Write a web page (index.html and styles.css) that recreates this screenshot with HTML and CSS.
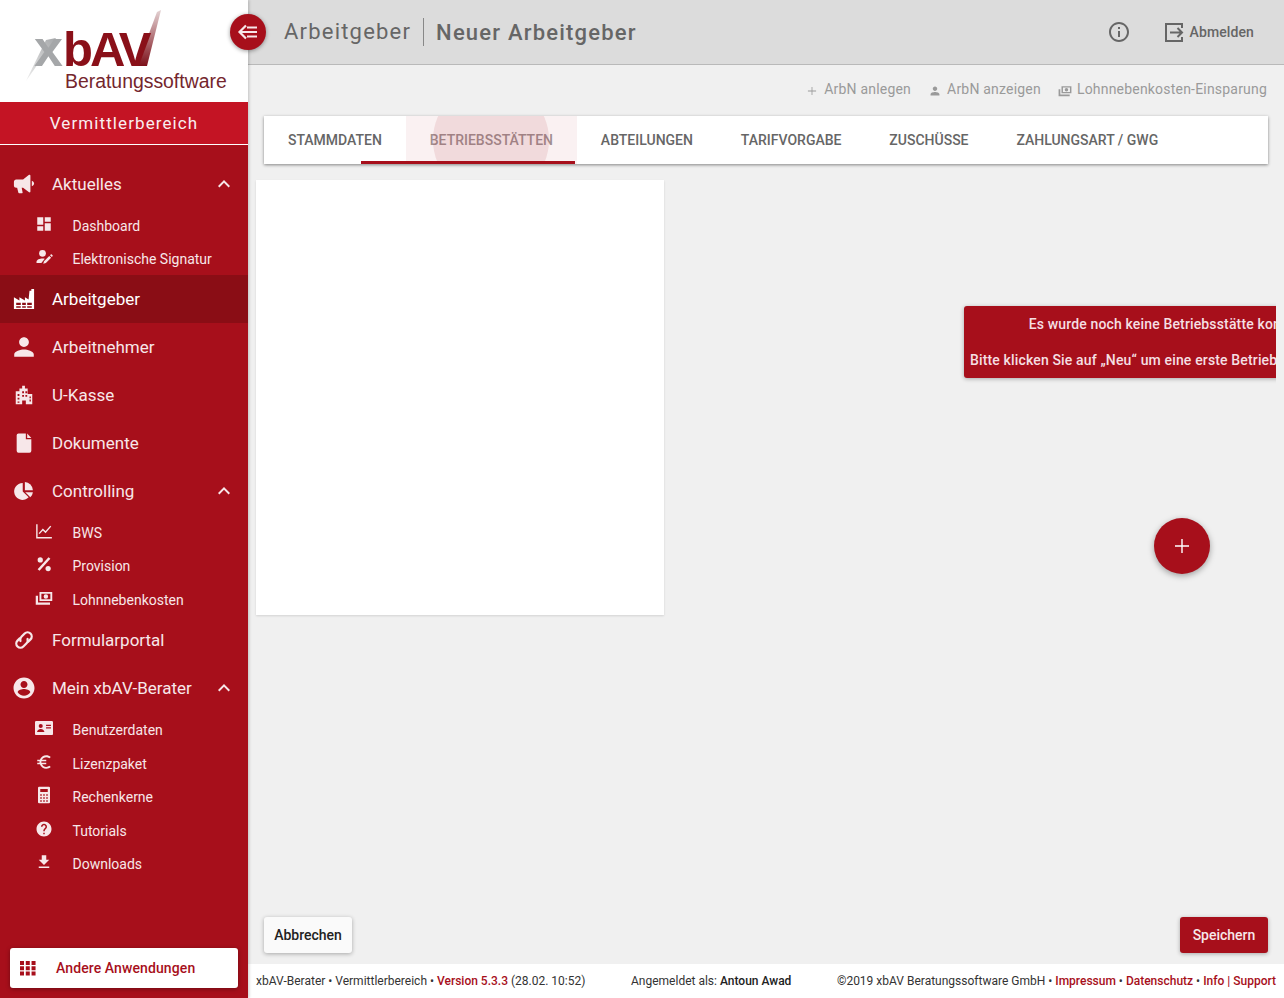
FILE: index.html
```html
<!DOCTYPE html>
<html lang="de">
<head>
    <meta charset="UTF-8">
    <meta name="viewport" content="width=device-width, initial-scale=1.0">
    <title>xbAV Beratungssoftware</title>
    <link rel="stylesheet" href="styles.css">
</head>
<body>
<svg class="sprite" aria-hidden="true">
    <symbol id="i-horn" viewBox="0 0 24 24"><path d="M1 9.500C1 8.100 2.100 7 3.500 7H11l6.500-5c.6-.4 1.500 0 1.500.8v17.400c0 .8-.9 1.200-1.500.8L11 16H9.500l1 5.200c.1.400-.2.800-.6.800H6.600c-.3 0-.6-.2-.7-.5L4.500 16h-1C2.100 16 1 14.900 1 13.500z"/><path d="M20.500 8.500c1.600.6 2.500 1.700 2.500 3s-.9 2.400-2.500 3z"/></symbol>
    <symbol id="i-dash" viewBox="0 0 24 24"><path d="M3 13h8V3H3v10zm0 8h8v-6H3v6zm10 0h8V11h-8v10zm0-18v6h8V3h-8z"/></symbol>
    <symbol id="i-sign" viewBox="0 0 24 24"><circle cx="10" cy="7" r="4.500"/><path d="M2 20v-1.500C2 15.500 6.500 14 10 14c1 0 2 .1 3 .4L8.500 20z"/><path d="M11 21l1-3.500 7-7 2.500 2.500-7 7zM20 9.500l1-1c.4-.4 1-.4 1.400 0l1 1c.4.400.4 1 0 1.400l-1 1z"/></symbol>
    <symbol id="i-factory" viewBox="0 0 24 24"><path fill-rule="evenodd" d="M1 23V10l6 3.500V10l6 3.500V10l4 2.500L18 3h2V1h3v22zM3.500 16v2.500h5V16zm6.500 0v2.500h4V16zm5.500 0v2.500h5V16zM3.500 20v1.500h5V20zm6.500 0v1.500h4V20zm5.500 0v1.500h5V20z"/></symbol>
    <symbol id="i-person" viewBox="3 3 18 18"><path d="M12 12c2.210 0 4-1.790 4-4s-1.790-4-4-4-4 1.790-4 4 1.790 4 4 4zm0 2c-2.670 0-8 1.340-8 4v2h16v-2c0-2.660-5.330-4-8-4z"/></symbol>
    <symbol id="i-city" viewBox="0 0 24 24"><path fill-rule="evenodd" d="M3 22V8h4V5h3V2h3v3h3v6h5v11h-7v-4h-4v4zM5 11v2h2v-2zm0 4v2h2v-2zm0 4v1.500h2V19zm5-11v2h2V8zm3.500 0v2h2V8zM10 12v2h2v-2zm3.500 0v2h2v-2zM18 13.500v2h1.500v-2zm0 3.500v2h1.500v-2z"/></symbol>
    <symbol id="i-file" viewBox="0 0 24 24"><path d="M14 1.500H6a2 2 0 0 0-2 2v17a2 2 0 0 0 2 2h12a2 2 0 0 0 2-2V8h-6z"/><path d="M15.500 1.500V6.500H20z"/></symbol>
    <symbol id="i-pie" viewBox="-1 -1 26 26"><path d="M10.500 2.500v10l7 7a10 10 0 1 1-7-17z"/><path d="M13 1.500a10 10 0 0 1 9.500 9.500H13z"/><path d="M13.500 13.500h9a10 10 0 0 1-3 6z"/></symbol>
    <symbol id="i-chart" viewBox="0 0 24 24"><path fill="none" stroke="currentColor" stroke-width="1.900" d="M2.500 3v18h20M5.500 15.500l5-5.500 3.500 3.500 7-8"/></symbol>
    <symbol id="i-percent" viewBox="0 0 24 24"><circle cx="7" cy="6.500" r="3.500"/><circle cx="17.500" cy="18" r="3.500"/><path d="M18 3l2.500 2L6 21l-2.500-2z"/></symbol>
    <symbol id="i-money" viewBox="0 0 24 24"><path fill-rule="evenodd" d="M6 4h17v12H6zm2.500 2.200v7.600h12V6.200zM14.500 7a3 3 0 1 1 0 6 3 3 0 0 1 0-6z"/><path d="M1 9h3v9h16v3H1z"/></symbol>
    <symbol id="i-link" viewBox="0 0 24 24"><g transform="rotate(-45 12 12)" fill="none" stroke="currentColor" stroke-width="2.500" stroke-linecap="round"><path d="M10 7.500H6.500a4.500 4.500 0 0 0 0 9h5a4.500 4.500 0 0 0 4-2.500"/><path d="M14 16.500h3.500a4.500 4.500 0 0 0 0-9h-5a4.500 4.500 0 0 0-4 2.500"/></g></symbol>
    <symbol id="i-account" viewBox="1 1 22 22"><path d="M12 1.500C6.200 1.500 1.500 6.200 1.500 12S6.200 22.500 12 22.500 22.500 17.800 22.500 12 17.800 1.500 12 1.500zm0 3.500c1.900 0 3.500 1.600 3.500 3.500S13.900 12 12 12s-3.500-1.600-3.500-3.500S10.100 5 12 5zm0 14.700c-2.600 0-4.900-1.300-6.300-3.400.03-2.100 4.200-3.200 6.300-3.200s6.270 1.100 6.300 3.200c-1.400 2.100-3.700 3.400-6.300 3.400z"/></symbol>
    <symbol id="i-card" viewBox="1 1 22 22"><path fill-rule="evenodd" d="M2 3.500h20a1.500 1.500 0 0 1 1 1.500v14a1.500 1.500 0 0 1-1 1.500H2a1.500 1.500 0 0 1-1-1.500V5a1.500 1.500 0 0 1 1-1.500zM8 7a2.500 2.500 0 1 0 0 5 2.500 2.500 0 0 0 0-5zm-4.500 10h9c0-2-2-3.800-4.500-3.800S3.500 15 3.500 17zM14.500 8v1.500h6V8zm0 3.200v1.500h6v-1.500z"/></symbol>
    <symbol id="i-euro" viewBox="0 0 24 24"><path d="M15 18.500c-2.510 0-4.680-1.420-5.760-3.500H15v-2H8.580c-.05-.33-.08-.66-.08-1s.03-.67.08-1H15V9H9.240C10.320 6.920 12.500 5.500 15 5.500c1.610 0 3.090.59 4.230 1.570L21 5.300C19.410 3.870 17.300 3 15 3c-3.920 0-7.240 2.510-8.480 6H3v2h3.060c-.04.33-.06.66-.06 1s.02.67.06 1H3v2h3.520c1.240 3.490 4.560 6 8.480 6 2.310 0 4.410-.87 6-2.300l-1.780-1.770c-1.130.98-2.600 1.570-4.220 1.570z"/></symbol>
    <symbol id="i-calc" viewBox="0 0 24 24"><path fill-rule="evenodd" d="M5.500 1h13A1.500 1.500 0 0 1 20 2.500v19a1.500 1.500 0 0 1-1.500 1.500h-13A1.500 1.500 0 0 1 4 21.500v-19A1.500 1.500 0 0 1 5.500 1zM7 4v4h10V4zm0 7v2h2v-2zm4 0v2h2v-2zm4 0v2h2v-2zM7 15v2h2v-2zm4 0v2h2v-2zm4 0v2h2v-2zM7 19v2h2v-2zm4 0v2h2v-2zm4 0v2h2v-2z"/></symbol>
    <symbol id="i-help" viewBox="0 0 24 24"><path d="M12 2C6.480 2 2 6.480 2 12s4.480 10 10 10 10-4.480 10-10S17.520 2 12 2zm1 17h-2v-2h2v2zm2.070-7.750l-.9.920C13.450 12.900 13 13.500 13 15h-2v-.5c0-1.100.45-2.100 1.170-2.830l1.240-1.260c.37-.36.59-.86.59-1.410 0-1.100-.9-2-2-2s-2 .9-2 2H8c0-2.210 1.790-4 4-4s4 1.790 4 4c0 .88-.36 1.680-.93 2.250z"/></symbol>
    <symbol id="i-download" viewBox="0 0 24 24"><path d="M19 9h-4V3H9v6H5l7 7 7-7zM5 18v2h14v-2H5z"/></symbol>
    <symbol id="i-less" viewBox="0 0 24 24"><path d="M12 8l-6 6 1.410 1.410L12 10.830l4.590 4.580L18 14z"/></symbol>
    <symbol id="i-apps" viewBox="0 0 18 18"><path d="M0 1h4.500v4.500H0zm6.500 0H11v4.500H6.500zM13 1h4.500v4.500H13zM0 7h4.500v4.500H0zm6.500 0H11v4.500H6.500zM13 7h4.500v4.500H13zM0 13h4.500v4.500H0zm6.500 0H11v4.500H6.500zM13 13h4.500v4.500H13z"/></symbol>
    <symbol id="i-info" viewBox="0 0 24 24"><path d="M11 7h2v2h-2zm0 4h2v6h-2zm1-9C6.480 2 2 6.480 2 12s4.480 10 10 10 10-4.480 10-10S17.520 2 12 2zm0 18c-4.410 0-8-3.590-8-8s3.590-8 8-8 8 3.590 8 8-3.590 8-8 8z"/></symbol>
    <symbol id="i-logout" viewBox="0 0 20 20"><path fill="none" stroke="currentColor" stroke-width="2" d="M18 6V2H2v17h16v-4M6 10.500h12M13.500 6l4.500 4.500-4.500 4.500"/></symbol>
    <symbol id="i-add" viewBox="0 0 24 24"><path d="M19 12.700h-6.300V19h-1.400v-6.300H5v-1.400h6.300V5h1.400v6.300H19z"/></symbol>
</svg>

<div class="app">
    <aside class="sidebar">
        <div class="logo">
            <svg class="logo-img" width="248" height="102" viewBox="0 0 248 102">
                <defs>
                    <linearGradient id="tail-v" x1="0" y1="1" x2="0" y2="0">
                        <stop offset="0" stop-color="#7d1019"/>
                        <stop offset="1" stop-color="#e4d3d4"/>
                    </linearGradient>
                    <linearGradient id="tail-x" x1="1" y1="0" x2="0" y2="1">
                        <stop offset="0" stop-color="#a5a7a9"/>
                        <stop offset="1" stop-color="#eeeeee"/>
                    </linearGradient>
                </defs>
                <polygon points="56,38 46,40 26,81" fill="url(#tail-x)"/>
                <polygon points="137,66 147,66 161,10 157,12" fill="url(#tail-v)"/>
                <text class="logo-x" x="34" y="66">x</text>
                <text class="logo-av" x="63" y="66">bAV</text>
                <text class="logo-sub" x="65" y="88">Beratungssoftware</text>
            </svg>
        </div>
        <div class="area">Vermittlerbereich</div>

        <nav class="menu">
            <a class="item"><svg class="ico"><use href="#i-horn"/></svg><span>Aktuelles</span><svg class="chev"><use href="#i-less"/></svg></a>
            <div class="subs">
                <a class="sub"><svg class="ico-s"><use href="#i-dash"/></svg><span>Dashboard</span></a>
                <a class="sub"><svg class="ico-s"><use href="#i-sign"/></svg><span>Elektronische Signatur</span></a>
            </div>
            <a class="item active"><svg class="ico"><use href="#i-factory"/></svg><span>Arbeitgeber</span></a>
            <a class="item"><svg class="ico"><use href="#i-person"/></svg><span>Arbeitnehmer</span></a>
            <a class="item"><svg class="ico"><use href="#i-city"/></svg><span>U-Kasse</span></a>
            <a class="item"><svg class="ico"><use href="#i-file"/></svg><span>Dokumente</span></a>
            <a class="item"><svg class="ico"><use href="#i-pie"/></svg><span>Controlling</span><svg class="chev"><use href="#i-less"/></svg></a>
            <div class="subs">
                <a class="sub"><svg class="ico-s"><use href="#i-chart"/></svg><span>BWS</span></a>
                <a class="sub"><svg class="ico-s"><use href="#i-percent"/></svg><span>Provision</span></a>
                <a class="sub"><svg class="ico-s"><use href="#i-money"/></svg><span>Lohnnebenkosten</span></a>
            </div>
            <a class="item"><svg class="ico"><use href="#i-link"/></svg><span>Formularportal</span></a>
            <a class="item"><svg class="ico"><use href="#i-account"/></svg><span>Mein xbAV-Berater</span><svg class="chev"><use href="#i-less"/></svg></a>
            <div class="subs subs-last">
                <a class="sub"><svg class="ico-s"><use href="#i-card"/></svg><span>Benutzerdaten</span></a>
                <a class="sub"><svg class="ico-s"><use href="#i-euro"/></svg><span>Lizenzpaket</span></a>
                <a class="sub"><svg class="ico-s"><use href="#i-calc"/></svg><span>Rechenkerne</span></a>
                <a class="sub"><svg class="ico-s"><use href="#i-help"/></svg><span>Tutorials</span></a>
                <a class="sub"><svg class="ico-s"><use href="#i-download"/></svg><span>Downloads</span></a>
            </div>
        </nav>

        <a class="other-apps"><svg class="apps"><use href="#i-apps"/></svg><span>Andere Anwendungen</span></a>
        <button class="toggle" type="button">
            <svg width="22" height="18" viewBox="0 0 22 18"><path d="M9 2.500L2.500 9 9 15.500M2.500 9H20M10 4.500h10M10 13.500h10" fill="none" stroke="currentColor" stroke-width="2.200"/></svg>
        </button>
    </aside>

    <main class="main">
        <header class="topbar">
            <span class="crumb">Arbeitgeber</span>
            <span class="crumb-current">Neuer Arbeitgeber</span>
            <a class="info"><svg><use href="#i-info"/></svg></a>
            <a class="logout"><svg><use href="#i-logout"/></svg><span>Abmelden</span></a>
        </header>

        <div class="quick">
            <a><svg><use href="#i-add"/></svg>ArbN anlegen</a>
            <a><svg class="small"><use href="#i-person"/></svg>ArbN anzeigen</a>
            <a><svg><use href="#i-money"/></svg>Lohnnebenkosten-Einsparung</a>
        </div>

        <div class="tabs">
            <a class="tab">STAMMDATEN</a>
            <a class="tab pressed">BETRIEBSSTÄTTEN</a>
            <a class="tab">ABTEILUNGEN</a>
            <a class="tab">TARIFVORGABE</a>
            <a class="tab">ZUSCHÜSSE</a>
            <a class="tab">ZAHLUNGSART / GWG</a>
            <div class="ink"></div>
        </div>

        <div class="content">
            <div class="list-panel"></div>
            <div class="detail">
                <div class="notice">Es wurde noch keine Betriebsstätte konfiguriert.<br><br>Bitte klicken Sie auf „Neu“ um eine erste Betriebsstätte anzulegen.</div>
                <button class="fab" type="button"><svg><use href="#i-add"/></svg></button>
            </div>
        </div>

        <div class="actions">
            <button class="btn" type="button">Abbrechen</button>
            <button class="btn primary" type="button">Speichern</button>
        </div>

        <footer class="footer">
            <span>xbAV-Berater • Vermittlerbereich • <a>Version 5.3.3</a> (28.02. 10:52)</span>
            <span>Angemeldet als: <b>Antoun Awad</b></span>
            <span>©2019 xbAV Beratungssoftware GmbH • <a>Impressum</a> • <a>Datenschutz</a> • <a>Info</a> <a>|</a> <a>Support</a></span>
        </footer>
    </main>
</div>
</body>
</html>
```

FILE: styles.css
```css
html, body {
    margin: 0;
    height: 100%;
}

body {
    font-family: Roboto, "Liberation Sans", sans-serif;
    background: #f0f0f0;
    overflow: hidden;
}

a {
    color: inherit;
    text-decoration: none;
}

button {
    font-family: inherit;
    border: 0;
    cursor: pointer;
}

.sprite {
    display: none;
}

.app {
    display: flex;
    height: 998px;
}

/* Seitenleiste */
.sidebar {
    position: relative;
    z-index: 2;
    flex: none;
    display: flex;
    flex-direction: column;
    width: 248px;
    background: #a70f1b;
    color: #f7e7e9;
    box-shadow: 1px 0 3px rgba(0, 0, 0, .2);
}

.logo {
    height: 102px;
    background: #fff;
}

.logo-img {
    display: block;
}

.logo-x {
    font: bold 52px "Liberation Sans", sans-serif;
    fill: #a5a7a9;
}

.logo-av {
    font: bold 49px "Liberation Sans", sans-serif;
    letter-spacing: -3px;
    fill: #8a1019;
}

.logo-sub {
    font: 19.400px "Liberation Sans", sans-serif;
    fill: #74262d;
}

.area {
    height: 42px;
    background: #c41424;
    border-bottom: 1px solid #fff;
    color: #f9eef0;
    font-size: 17px;
    line-height: 42px;
    letter-spacing: 1.100px;
    text-align: center;
}

.menu {
    padding-top: 15px;
}

.item {
    display: flex;
    align-items: center;
    gap: 17px;
    height: 48px;
    padding: 0 12px 0 13px;
    font-size: 17px;
}

.item.active {
    background: #8a0d15;
    color: #fff;
}

.ico {
    flex: none;
    width: 22px;
    height: 22px;
    fill: currentColor;
}

.chev {
    flex: none;
    width: 24px;
    height: 24px;
    margin-left: auto;
    fill: currentColor;
}

.subs-last {
    padding-top: 1px;
}

.sub {
    display: flex;
    align-items: center;
    gap: 19.500px;
    height: 33.500px;
    padding-left: 35px;
    font-size: 14px;
}

.sub span {
    position: relative;
    top: 1px;
}

.ico-s {
    flex: none;
    width: 18px;
    height: 18px;
    margin-top: -2px;
    fill: currentColor;
}

.other-apps {
    display: flex;
    align-items: center;
    gap: 20px;
    height: 40px;
    margin: auto 10px 10px;
    padding-left: 10px;
    background: #fff;
    border-radius: 3px;
    box-shadow: 0 1px 4px rgba(0, 0, 0, .35);
    color: #a70f1b;
    font-size: 14px;
    font-weight: 500;
    letter-spacing: .1px;
}

.apps {
    flex: none;
    width: 16px;
    height: 16px;
    fill: currentColor;
}

/* Knopf liegt auf der Kante der Seitenleiste */
.toggle {
    position: absolute;
    left: 230px;
    top: 14px;
    display: flex;
    align-items: center;
    justify-content: center;
    width: 36px;
    height: 36px;
    padding: 0;
    border-radius: 50%;
    background: #a70f1b;
    color: #f7e7e9;
    box-shadow: 0 1px 4px rgba(0, 0, 0, .4);
}

/* Hauptbereich */
.main {
    flex: 1;
    min-width: 0;
    display: flex;
    flex-direction: column;
}

.topbar {
    flex: none;
    display: flex;
    align-items: center;
    height: 64px;
    padding: 0 30px 0 36px;
    background: #dcdcdc;
    border-bottom: 1px solid #b9b9b9;
    color: #666;
}

.crumb {
    padding-right: 12px;
    border-right: 1px solid #888;
    font-size: 22px;
    line-height: 28px;
    letter-spacing: 1.200px;
}

.crumb-current {
    padding-left: 12px;
    font-size: 22px;
    font-weight: 500;
    letter-spacing: 1.200px;
}

.info {
    display: flex;
    margin-left: auto;
    margin-right: 33px;
}

.info svg {
    width: 24px;
    height: 24px;
    fill: currentColor;
}

.logout {
    display: flex;
    align-items: center;
    gap: 6px;
    font-size: 14px;
    font-weight: 500;
    letter-spacing: .1px;
}

.logout svg {
    width: 20px;
    height: 20px;
}

.quick {
    flex: none;
    display: flex;
    justify-content: flex-end;
    align-items: center;
    gap: 17px;
    height: 48px;
    padding: 0 17px 3px 0;
    color: #9a9a9a;
    font-size: 14px;
    letter-spacing: .2px;
}

.quick a {
    display: flex;
    align-items: center;
    gap: 5px;
}

.quick svg {
    width: 14px;
    height: 14px;
    margin-top: 3px;
    fill: currentColor;
}

.quick .small {
    width: 10px;
    height: 10px;
    margin: 3px 2px 0;
}

.tabs {
    position: relative;
    flex: none;
    display: flex;
    height: 48px;
    margin: 0 16px;
    background: #fff;
    box-shadow: 0 1px 3px rgba(0, 0, 0, .45);
}

.tab {
    position: relative;
    padding: 0 23.950px;
    overflow: hidden;
    color: #666;
    font-size: 14px;
    font-weight: 500;
    line-height: 48px;
}

.pressed {
    background: rgba(167, 15, 27, .06);
    color: #a08e90;
}

/* Ripple vom Klick */
.pressed::after {
    content: "";
    position: absolute;
    left: 27px;
    top: -34px;
    width: 116px;
    height: 116px;
    border-radius: 50%;
    background: rgba(167, 15, 27, .1);
}

.ink {
    position: absolute;
    left: 97px;
    bottom: 0;
    width: 214px;
    height: 3px;
    background: #a70f1b;
}

.content {
    flex: none;
    display: flex;
    height: 435px;
    margin-top: 16px;
    padding: 0 8px;
}

.list-panel {
    flex: none;
    width: 408px;
    background: #fff;
    box-shadow: 0 1px 2px rgba(0, 0, 0, .12);
}

.detail {
    flex: 1;
    min-width: 0;
    padding-top: 126px;
    overflow: hidden;
}

.notice {
    width: max-content;
    margin-left: 300px;
    padding: 9px 6px;
    background: #a70f1b;
    border-radius: 3px;
    box-shadow: 0 1px 4px rgba(0, 0, 0, .3);
    color: #f5dfe2;
    font-size: 14px;
    font-weight: 500;
    line-height: 18px;
    letter-spacing: .15px;
    white-space: nowrap;
    text-align: center;
}

.fab {
    display: flex;
    align-items: center;
    justify-content: center;
    width: 56px;
    height: 56px;
    margin: 140px 0 6px 490px;
    padding: 0;
    border-radius: 50%;
    background: #a70f1b;
    box-shadow: 0 2px 6px rgba(0, 0, 0, .35);
    color: #fff;
}

.fab svg {
    width: 24px;
    height: 24px;
    fill: currentColor;
}

.actions {
    display: flex;
    justify-content: space-between;
    align-items: flex-start;
    margin-top: auto;
    padding: 0 16px 11px;
}

.btn {
    width: 88px;
    height: 36px;
    padding: 0;
    background: #fafafa;
    border-radius: 3px;
    box-shadow: 0 1px 4px rgba(0, 0, 0, .3);
    color: #222;
    font-size: 14px;
    font-weight: 500;
}

.btn.primary {
    background: #a70f1b;
    color: #f7e7e9;
}

.footer {
    flex: none;
    display: flex;
    justify-content: space-between;
    align-items: center;
    height: 34px;
    padding: 0 8px;
    background: #fff;
    color: #333;
    font-size: 12px;
}

.footer a {
    color: #a70f1b;
    font-weight: 500;
}

.footer b {
    font-weight: 500;
    color: #222;
}
```
